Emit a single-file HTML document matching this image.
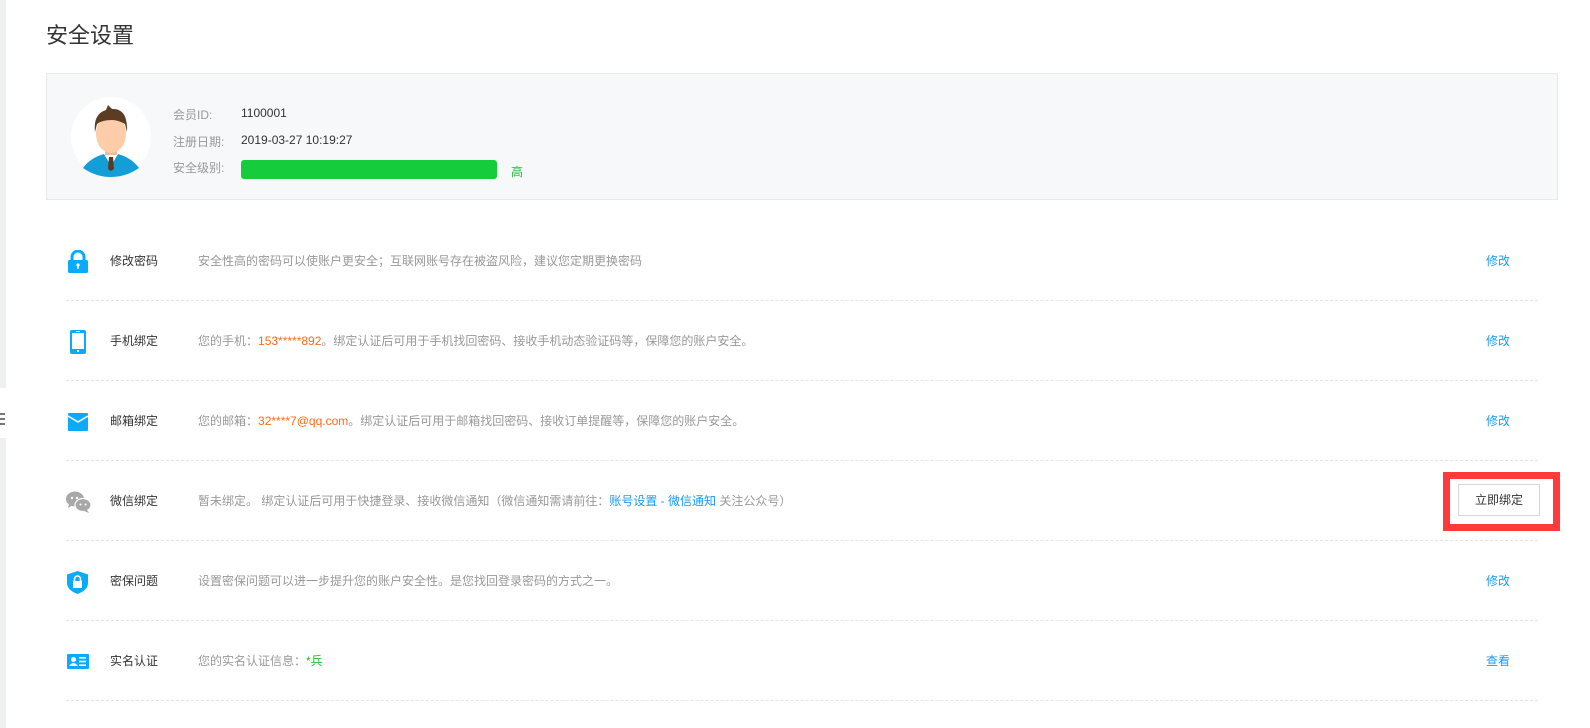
<!DOCTYPE html>
<html><head><meta charset="utf-8"><style>
*{margin:0;padding:0;box-sizing:border-box}
body{width:1590px;height:728px;background:#fff;position:relative;overflow:hidden;font-family:"Liberation Sans","Noto Sans CJK SC",sans-serif;font-size:12px;color:#333}
.a{position:absolute;white-space:nowrap}
.side{position:absolute;left:0;top:0;width:6px;height:728px;background:#eef1f4}
.title{left:46px;top:18px;font-size:22px;color:#333}
.panel{position:absolute;left:46px;top:73px;width:1512px;height:127px;background:#f7f8fa;border:1px solid #e8e8e8}
.lbl{color:#999}
.line{position:absolute;left:66px;width:1472px;border-top:1px dashed #e4e4e4;height:0}
.name{left:110px;color:#333;font-size:12px}
.desc{left:198px;color:#999}
.link{left:1486px;color:#1a9af5}
.o{color:#ff6a13}
.b{color:#1a9af5}
.g{color:#1fbf3a}
</style></head><body>
<div class="side"></div>
<div style="position:absolute;left:0;top:388px;width:8px;height:50px;background:#fff"></div>
<div style="position:absolute;left:0;top:413px;width:5px;height:2px;background:#777"></div>
<div style="position:absolute;left:0;top:418px;width:5px;height:2px;background:#777"></div>
<div style="position:absolute;left:0;top:423px;width:5px;height:2px;background:#777"></div>
<div class="a title">安全设置</div>
<div class="panel"></div>
<svg class="a" style="left:70px;top:96px" width="82" height="82" viewBox="0 0 82 82">
<circle cx="41" cy="41" r="40" fill="#fff"/>
<path d="M13 72 Q20 62 34 58 L48 58 Q62 62 69 72 Q56 81 41 81 Q26 81 13 72Z" fill="#139ed8"/>
<path d="M34 58 L41 70 L48 58Z" fill="#fff"/>
<path d="M39 61 L43 61 L44 73 L41 75 L38 73Z" fill="#5a3a22"/>
<rect x="35" y="48" width="12" height="11" fill="#f3b894"/>
<ellipse cx="41" cy="38" rx="15" ry="19" fill="#fdcda9"/>
<path d="M25 36 Q23 18 36 14 L38 9 L42 13 Q58 12 57 36 L55 28 Q48 24 42 24 Q32 24 27 28Z" fill="#5a3d22"/>
</svg>
<div class="a lbl" style="left:173px;top:106px">会员ID:</div>
<div class="a" style="left:241px;top:106px">1100001</div>
<div class="a lbl" style="left:173px;top:133px">注册日期:</div>
<div class="a" style="left:241px;top:133px">2019-03-27 10:19:27</div>
<div class="a lbl" style="left:173px;top:159px">安全级别:</div>
<div style="position:absolute;left:241px;top:160px;width:256px;height:19px;background:#15cc3d;border-radius:3px"></div>
<div class="a g" style="left:511px;top:163px">高</div>

<svg class="a" style="left:67px;top:250px" width="22" height="23" viewBox="0 0 22 23"><path d="M5 10 V7 A6 6 0 0 1 17 7 V10" fill="none" stroke="#0aabff" stroke-width="3"/><rect x="1" y="10" width="20" height="13" rx="1.5" fill="#0aabff"/><circle cx="11" cy="15" r="1.6" fill="#fff"/><rect x="10.3" y="15" width="1.4" height="4" fill="#fff"/></svg>
<div class="a name" style="top:252px">修改密码</div>
<div class="a desc" style="top:252px">安全性高的密码可以使账户更安全；互联网账号存在被盗风险，建议您定期更换密码</div>
<div class="a link" style="top:252px">修改</div>
<div class="line" style="top:300px"></div>

<svg class="a" style="left:70px;top:330px" width="16" height="24" viewBox="0 0 16 24"><rect x="0" y="0" width="16" height="24" rx="2" fill="#0aabff"/><rect x="2" y="3" width="12" height="16" fill="#fff"/><rect x="6" y="1" width="4" height="1" fill="#fff"/><rect x="7" y="20" width="2" height="2" fill="#fff"/></svg>
<div class="a name" style="top:332px">手机绑定</div>
<div class="a desc" style="top:332px">您的手机：<span class="o">153*****892</span>。绑定认证后可用于手机找回密码、接收手机动态验证码等，保障您的账户安全。</div>
<div class="a link" style="top:332px">修改</div>
<div class="line" style="top:380px"></div>

<svg class="a" style="left:68px;top:413px" width="20" height="18" viewBox="0 0 20 18"><rect x="0" y="0" width="20" height="18" rx="1" fill="#0aabff"/><path d="M0 3 L10 9 L20 3" fill="none" stroke="#fff" stroke-width="1.6"/></svg>
<div class="a name" style="top:412px">邮箱绑定</div>
<div class="a desc" style="top:412px">您的邮箱：<span class="o">32****7@qq.com</span>。绑定认证后可用于邮箱找回密码、接收订单提醒等，保障您的账户安全。</div>
<div class="a link" style="top:412px">修改</div>
<div class="line" style="top:460px"></div>

<svg class="a" style="left:66px;top:491px" width="25" height="22" viewBox="0 0 25 22"><ellipse cx="9" cy="8" rx="9" ry="7.5" fill="#a8a8a8"/><path d="M3 13 L2 17 L7 14Z" fill="#a8a8a8"/><ellipse cx="17" cy="14" rx="8" ry="6.5" fill="#a8a8a8" stroke="#fff" stroke-width="1.2"/><path d="M21 19 L23 22 L18 20Z" fill="#a8a8a8"/><circle cx="6" cy="7" r="1.2" fill="#fff"/><circle cx="11" cy="7" r="1.2" fill="#fff"/><circle cx="14.5" cy="13.5" r="1" fill="#fff"/><circle cx="19.5" cy="13.5" r="1" fill="#fff"/></svg>
<div class="a name" style="top:492px">微信绑定</div>
<div class="a desc" style="top:492px">暂未绑定。 绑定认证后可用于快捷登录、接收微信通知（微信通知需请前往：<span class="b">账号设置 - 微信通知</span> 关注公众号）</div>
<div style="position:absolute;left:1443px;top:472px;width:117px;height:59px;border:7px solid #ff3a3a"></div>
<div class="a" style="left:1458px;top:484px;width:82px;height:32px;border:1px solid #d6d6d6;text-align:center;line-height:30px;color:#333">立即绑定</div>
<div class="line" style="top:540px"></div>

<svg class="a" style="left:67px;top:571px" width="21" height="23" viewBox="0 0 21 23"><path d="M10.5 0 L21 3.5 V12 Q21 19 10.5 23 Q0 19 0 12 V3.5Z" fill="#0aabff"/><path d="M7.5 10 V8 A3 3 0 0 1 13.5 8 V10" fill="none" stroke="#fff" stroke-width="1.6"/><rect x="6" y="10" width="9" height="7" fill="#fff"/></svg>
<div class="a name" style="top:572px">密保问题</div>
<div class="a desc" style="top:572px">设置密保问题可以进一步提升您的账户安全性。是您找回登录密码的方式之一。</div>
<div class="a link" style="top:572px">修改</div>
<div class="line" style="top:620px"></div>

<svg class="a" style="left:67px;top:654px" width="22" height="15" viewBox="0 0 22 15"><rect x="0" y="0" width="22" height="15" rx="1" fill="#0aabff"/><circle cx="6.5" cy="5.5" r="2.5" fill="#fff"/><path d="M2 12 Q6.5 6 11 12Z" fill="#fff"/><rect x="12" y="3" width="7" height="1.6" fill="#fff"/><rect x="12" y="6.7" width="7" height="1.6" fill="#fff"/><rect x="12" y="10.4" width="7" height="1.6" fill="#fff"/></svg>
<div class="a name" style="top:652px">实名认证</div>
<div class="a desc" style="top:652px">您的实名认证信息：<span class="g">*兵</span></div>
<div class="a link" style="top:652px">查看</div>
<div class="line" style="top:700px"></div>
</body></html>
